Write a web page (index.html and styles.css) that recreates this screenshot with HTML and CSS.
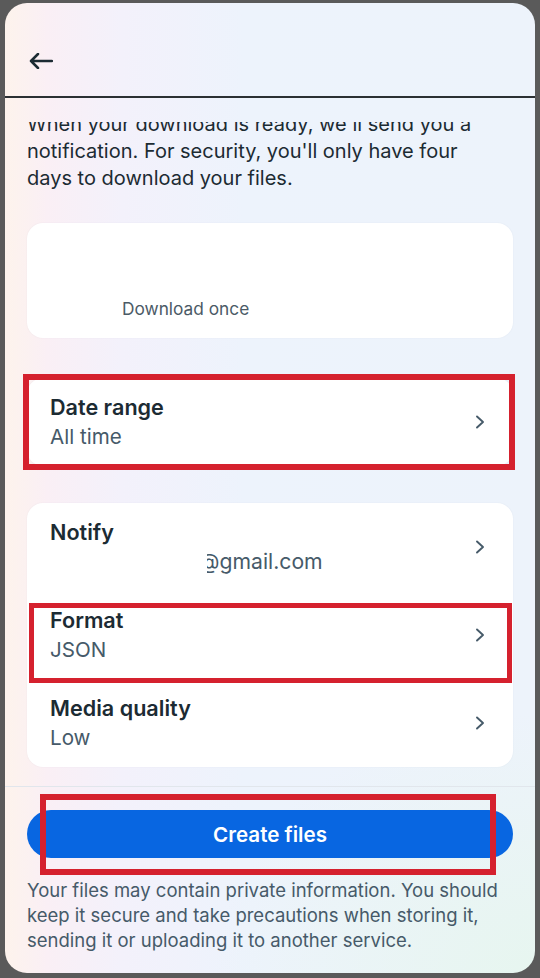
FILE: index.html
```html
<!DOCTYPE html>
<html lang="en">
<head>
<meta charset="utf-8">
<title>Download your information</title>
<link rel="stylesheet" href="styles.css">
</head>
<body>
<div class="frame">
  <header class="topbar">
    <button class="back" aria-label="Back">
      <svg width="24" height="16" viewBox="0 0 24 16"><path d="M2 8 H23 M9 1 L2 8 L9 15" fill="none" stroke="#1c2b33" stroke-width="2.5" stroke-linecap="round" stroke-linejoin="round"/></svg>
    </button>
  </header>
  <main class="scroll">
    <div class="content">
      <p class="intro">When your download is ready, we'll send you a notification. For security, you'll only have four days to download your files.</p>
      <section class="card card-once">
        <div class="once-label">Download once</div>
      </section>
      <section class="card card-date">
        <div class="row">
          <div class="row-text">
            <div class="row-title">Date range</div>
            <div class="row-value">All time</div>
          </div>
          <svg class="chev" width="10" height="14" viewBox="0 0 10 14"><path d="M2 1.5 L8 7 L2 12.5" fill="none" stroke="#465a69" stroke-width="1.9" stroke-linecap="round" stroke-linejoin="round"/></svg>
        </div>
      </section>
      <section class="card card-list">
        <div class="row">
          <div class="row-text">
            <div class="row-title">Notify</div>
            <div class="row-value"><span class="email">@gmail.com</span></div>
          </div>
          <svg class="chev" width="10" height="14" viewBox="0 0 10 14"><path d="M2 1.5 L8 7 L2 12.5" fill="none" stroke="#465a69" stroke-width="1.9" stroke-linecap="round" stroke-linejoin="round"/></svg>
        </div>
        <div class="row">
          <div class="row-text">
            <div class="row-title">Format</div>
            <div class="row-value">JSON</div>
          </div>
          <svg class="chev" width="10" height="14" viewBox="0 0 10 14"><path d="M2 1.5 L8 7 L2 12.5" fill="none" stroke="#465a69" stroke-width="1.9" stroke-linecap="round" stroke-linejoin="round"/></svg>
        </div>
        <div class="row">
          <div class="row-text">
            <div class="row-title">Media quality</div>
            <div class="row-value">Low</div>
          </div>
          <svg class="chev" width="10" height="14" viewBox="0 0 10 14"><path d="M2 1.5 L8 7 L2 12.5" fill="none" stroke="#465a69" stroke-width="1.9" stroke-linecap="round" stroke-linejoin="round"/></svg>
        </div>
      </section>
    </div>
  </main>
  <footer class="footer">
    <button class="primary">Create files</button>
    <p class="disclaimer">Your files may contain private information. You should keep it secure and take precautions when storing it, sending it or uploading it to another service.</p>
  </footer>
  <div class="mark mark-date"></div>
  <div class="mark mark-format"></div>
  <div class="mark mark-button"></div>
</div>
</body>
</html>
```

FILE: styles.css
```css
* { box-sizing: border-box; }
html, body { margin: 0; padding: 0; }
body {
  width: 540px;
  height: 978px;
  background: #5a5a5a;
  font-family: "Inter", "Roboto", "Liberation Sans", sans-serif;
  color: #1c2b33;
  overflow: hidden;
}
.frame {
  position: relative;
  margin: 3px 5px 0 5px;
  width: 530px;
  height: 970px;
  border-radius: 22px;
  overflow: hidden;
  display: flex;
  flex-direction: column;
  background:
    radial-gradient(ellipse 320px 260px at 100% 100%, rgba(230, 246, 238, 0.9), rgba(230, 246, 238, 0) 100%),
    linear-gradient(90deg, #fdf3ec 0%, #faeff5 8%, #f3f1fb 22%, #edf3fc 45%, #edf3fb 100%);
}
.topbar {
  height: 95px;
  flex: none;
  border-bottom: 2px solid #2b3033;
  display: flex;
  align-items: center;
  padding-left: 24px;
  padding-top: 22px;
}
.back {
  border: 0;
  background: none;
  padding: 0;
  width: 26px;
  height: 20px;
  display: flex;
  align-items: center;
}
.scroll {
  flex: 1;
  margin-top: 24px;
  overflow: hidden;
}
.content {
  margin-top: -11px;
  padding: 0 22px;
}
.intro {
  margin: 0;
  max-width: 462px;
  font-size: 20px;
  line-height: 27px;
  color: #1c2b33;
}
.card {
  background: #fff;
  border-radius: 16px;
  box-shadow: 0 0 2px rgba(20, 40, 70, 0.05);
}
.card-once {
  margin-top: 31px;
  height: 115px;
  padding: 74px 0 0 95px;
}
.once-label {
  font-size: 17.3px;
  line-height: 24px;
  color: #4b5a66;
}
.card-date { margin-top: 40px; }
.card-list { margin-top: 37px; }
.row {
  height: 88px;
  display: flex;
  align-items: center;
  justify-content: space-between;
  padding: 0 28px 0 23px;
}
.row-text { display: flex; flex-direction: column; }
.row-title {
  font-size: 21.6px;
  line-height: 29px;
  font-weight: 600;
  color: #1c2b33;
}
.row-value {
  font-size: 20.6px;
  line-height: 29px;
  color: #465a69;
}
.email {
  display: inline-block;
  margin-left: 149px;
  font-size: 21.2px;
  clip-path: inset(0 0 0 8px);
}
.chev { flex: none; }
.footer {
  flex: none;
  border-top: 1px solid #e1e6ec;
  padding: 23px 22px 20px 22px;
}
.primary {
  display: block;
  width: 100%;
  height: 48px;
  border: 0;
  border-radius: 24px;
  background: #0866e1;
  color: #fff;
  font-family: inherit;
  font-size: 20.6px;
  font-weight: 600;
}
.disclaimer {
  margin: 20px 0 0 0;
  font-size: 18.5px;
  line-height: 25px;
  color: #465a69;
}
.mark {
  position: absolute;
  border-style: solid;
  border-color: #d5212e;
}
.mark-date { left: 18px; top: 371px; width: 492px; height: 96px; border-width: 6px; }
.mark-format { left: 24px; top: 600px; width: 483px; height: 80px; border-width: 5px; }
.mark-button { left: 35px; top: 791px; width: 456px; height: 81px; border-width: 6px; }
```
